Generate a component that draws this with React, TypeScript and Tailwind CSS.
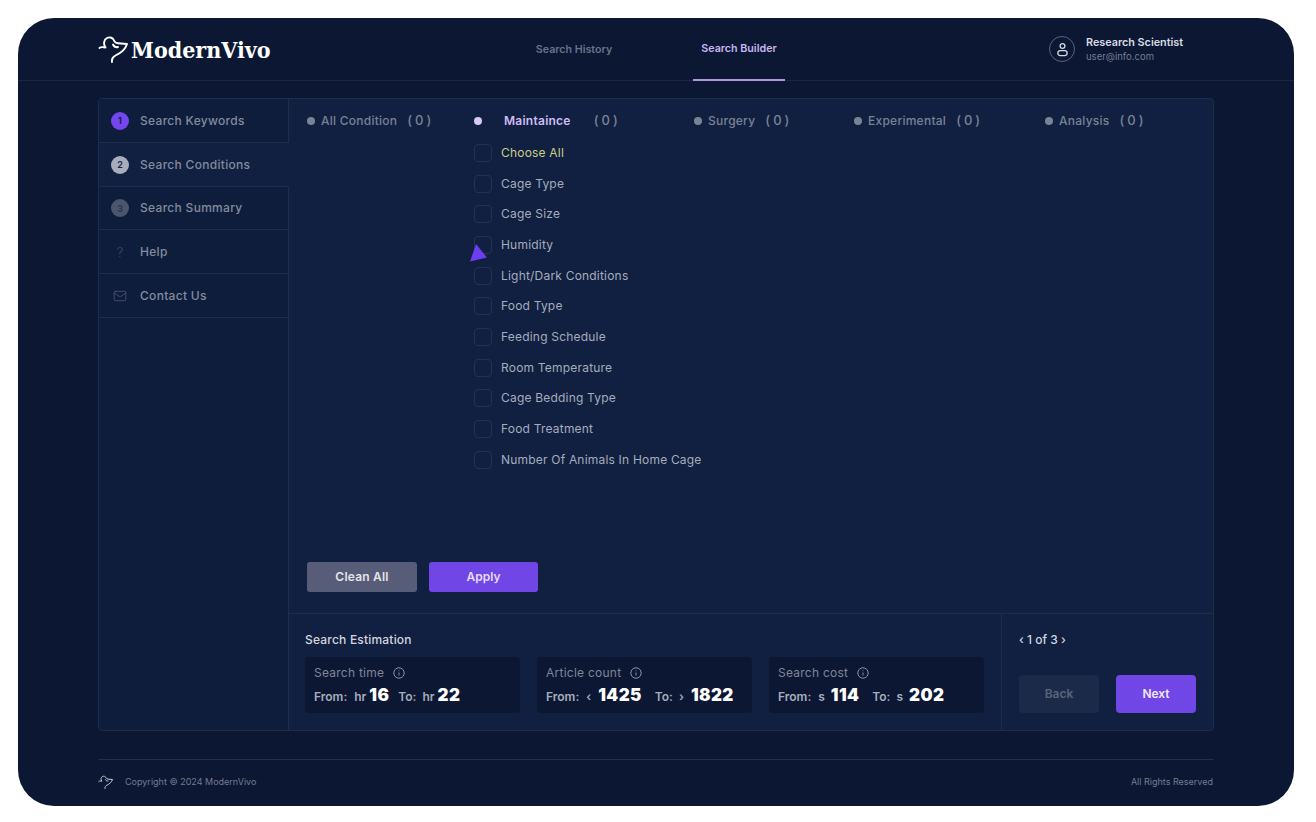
import { Mail } from "lucide-react";

const Logo = ({ className }: { className: string }) => (
  <svg viewBox="0 0 30 28" fill="none" stroke="currentColor" strokeWidth="1.9" strokeLinecap="round" strokeLinejoin="round" className={className}>
    <path d="M1.5 13C2.5 11.5 5 12 7.5 12.5C5 9 6 4.5 9 3C12 1.5 15 3 16 5.5C16.5 7 18 8 20 8.2L29 9C27.5 14 23 18 17.5 20.5C15 21.8 13.5 24 14 27" />
    <path d="M15 9.5C16 11.5 18 12.5 20 12" />
  </svg>
);

const Info = () => (
  <svg viewBox="0 0 12 12" fill="none" stroke="currentColor" className="w-[12px] h-[12px] text-[#8a93a8]">
    <circle cx="6" cy="6" r="5.2" />
    <path d="M6 5.5V8.5M6 3.4V4.2" />
  </svg>
);

const tabs = [
  { label: "All Condition", w: "w-[167px]", gap: "gap-[6px]", countGap: "ml-[4px]" },
  { label: "Maintaince", w: "w-[220px]", gap: "gap-[22px]", countGap: "ml-[1px]", active: true },
  { label: "Surgery", w: "w-[160px]", gap: "gap-[6px]", countGap: "ml-[4px]" },
  { label: "Experimental", w: "w-[191px]", gap: "gap-[6px]", countGap: "ml-[4px]" },
  { label: "Analysis", w: "w-[150px]", gap: "gap-[6px]", countGap: "ml-[4px]" },
];

const options = [
  "Choose All", "Cage Type", "Cage Size", "Humidity", "Light/Dark Conditions", "Food Type",
  "Feeding Schedule", "Room Temperature", "Cage Bedding Type", "Food Treatment", "Number Of Animals In Home Cage",
];

const estimates = [
  { title: "Search time", from: "16", to: "22", unit: "hr", toUnit: "hr", numGap: "ml-[3px]", toGap: "ml-[9px]" },
  { title: "Article count", from: "1425", to: "1822", unit: "‹", toUnit: "›", numGap: "ml-[7px]", toGap: "ml-[13px]" },
  { title: "Search cost", from: "114", to: "202", unit: "s", toUnit: "s", numGap: "ml-[6px]", toGap: "ml-[13px]" },
];

const sideRows = [
  { label: "Search Keywords", n: "1", badge: "bg-[#7446ee] text-[#0e1a38]" },
  { label: "Search Conditions", n: "2", badge: "bg-[#a6adbb] text-[#1a2540]", active: true },
  { label: "Search Summary", n: "3", badge: "bg-[#4a566e] text-[#283450]" },
];

export default function App() {
  return (
    <div className="h-[822px] bg-white pt-[18px] pl-[18px] font-['Inter',sans-serif]">
      <div className="w-[1276px] h-[788px] rounded-[36px] bg-[#0c1733] overflow-hidden flex flex-col">
        {/* Header */}
        <header className="h-[63px] shrink-0 border-b border-[#1a2742] flex pl-[80px]">
          <div className="w-[430px] flex items-center gap-[3px] text-white">
            <Logo className="w-[30px] h-[28px] text-white" />
            <span className="font-['DejaVu_Serif_Condensed','Liberation_Serif',serif] font-bold text-[23px] leading-none">ModernVivo</span>
          </div>
          <nav className="flex gap-[73px]">
            <div className="w-[92px] pt-[2px] flex items-center justify-center text-[10.7px] font-semibold text-[#69728a] whitespace-nowrap">Search History</div>
            <div className="w-[92px] pt-[2px] flex items-center justify-center text-[10.7px] font-semibold text-[#c6b6f0] border-b-2 border-[#a99ad8] whitespace-nowrap -mb-px">Search Builder</div>
          </nav>
          <div className="ml-[264px] flex items-center gap-[11px]">
            <div className="w-[26px] h-[26px] rounded-full border border-[#5a6479] flex items-center justify-center">
              <svg viewBox="0 0 14 16" fill="none" stroke="#d5d8df" strokeWidth="1.4" className="w-[13px] h-[15px]">
                <circle cx="7" cy="4.2" r="2.6" />
                <rect x="2" y="9.2" width="10" height="5.4" rx="2.7" />
              </svg>
            </div>
            <div className="flex flex-col gap-[2px]">
              <span className="text-[10.8px] leading-[13px] font-semibold text-[#d9dce3] whitespace-nowrap">Research Scientist</span>
              <span className="text-[9.5px] leading-[12px] text-[#737c91]">user@info.com</span>
            </div>
          </div>
        </header>

        {/* Panel */}
        <div className="mt-[17px] ml-[80px] w-[1116px] h-[633px] shrink-0 border border-[#1f2d4c] rounded-[4px] bg-[#112041] flex overflow-hidden">
          <aside className="w-[190px] shrink-0 flex flex-col border-r border-[#1f2d4c] bg-[#0f1d3c]">
            {sideRows.map((r) => (
              <div
                key={r.n}
                className={`h-[43.8px] shrink-0 flex items-center gap-[11px] pl-[12px] pt-px border-b ${
                  r.active ? "bg-[#112041] -mr-px border-[#1f2d4c]" : "border-[#1f2d4c]"
                }`}
              >
                <span className={`w-[18px] h-[18px] rounded-full flex items-center justify-center text-[9px] font-semibold ${r.badge}`}>{r.n}</span>
                <span className="text-[12px] font-medium tracking-[0.3px] text-[#838b9e] whitespace-nowrap">{r.label}</span>
              </div>
            ))}
            <div className="h-[43.8px] shrink-0 flex items-center gap-[11px] pl-[12px] pt-px border-b border-[#1f2d4c]">
              <span className="w-[18px] text-center text-[13px] font-light text-[#3f4a63]">?</span>
              <span className="text-[12px] font-medium tracking-[0.3px] text-[#838b9e]">Help</span>
            </div>
            <div className="h-[43.8px] shrink-0 flex items-center gap-[11px] pl-[12px] pt-px border-b border-[#1f2d4c]">
              <span className="w-[18px] flex justify-center"><Mail size={14} strokeWidth={1.2} className="text-[#56607a]" /></span>
              <span className="text-[12px] font-medium tracking-[0.3px] text-[#838b9e]">Contact Us</span>
            </div>
          </aside>

          <main className="flex-1 flex flex-col min-w-0">
            <section className="relative h-[515px] shrink-0 border-b border-[#1f2d4c] pl-[18px] pt-[14px] flex flex-col">
              <div className="flex h-[16px] items-center">
                {tabs.map((t) => (
                  <div key={t.label} className={`${t.w} shrink-0 flex items-center ${t.gap}`}>
                    <span className={`w-[8px] h-[8px] rounded-full ${t.active ? "bg-[#d8c8f8]" : "bg-[#7a8296]"}`} />
                    <span className={`text-[12px] whitespace-nowrap tracking-[0.25px] ${t.active ? "font-semibold text-[#cdbcf3]" : "font-medium text-[#7a8296]"}`}>{t.label}</span>
                    <span className={`${t.countGap} text-[13px] font-medium tracking-[3px] whitespace-nowrap text-[#7a8296]`}>(0)</span>
                  </div>
                ))}
              </div>

              <ul className="mt-[15px] ml-[167px] flex flex-col gap-[12.67px]">
                {options.map((o, i) => (
                  <li key={o} className="h-[18px] flex items-center gap-[9px]">
                    <span className="w-[18px] h-[18px] rounded-[4px] border border-[#24324f]" />
                    <span className={`text-[12px] tracking-[0.2px] whitespace-nowrap ${i === 0 ? "text-[#c9cf86]" : "text-[#a5acbc]"}`}>{o}</span>
                  </li>
                ))}
              </ul>

              <svg viewBox="0 0 18 19" className="absolute left-[180px] top-[144px] w-[18px] h-[19px]">
                <polygon points="1,18.5 7,1 18,14.5" fill="#6d3df0" />
              </svg>

              <div className="mt-auto mb-[21px] flex gap-[12px]">
                <button className="w-[110px] h-[30px] rounded-[3px] bg-[#575c78] text-[12px] font-semibold tracking-[0.2px] text-[#e4e5eb]">Clean All</button>
                <button className="w-[109px] h-[30px] rounded-[3px] bg-[#7146e6] text-[12px] font-semibold text-[#e6dcfb]">Apply</button>
              </div>
            </section>

            <section className="flex-1 flex min-h-0">
              <div className="w-[713px] shrink-0 border-r border-[#1f2d4c] pl-[16px] pt-[18px]">
                <h3 className="text-[12px] leading-[15px] font-medium tracking-[0.2px] text-[#d3d6de]">Search Estimation</h3>
                <div className="mt-[10px] flex gap-[17px]">
                  {estimates.map((e) => (
                    <div key={e.title} className="w-[215px] h-[56px] rounded-[4px] bg-[#0c1734] pl-[9px] pt-[8px]">
                      <div className="flex items-center gap-[9px] h-[15px]">
                        <span className="text-[12px] text-[#7e869a] tracking-[0.25px]">{e.title}</span>
                        <Info />
                      </div>
                      <div className="mt-[5px] flex items-baseline text-[12px] font-semibold text-[#a6acba] whitespace-nowrap">
                        <span>From:</span>
                        <span className="ml-[7px]">{e.unit}</span>
                        <span className={`${e.numGap} text-[17px] leading-[20px] font-black text-white tracking-[0.4px]`}>{e.from}</span>
                        <span className={e.toGap}>To:</span>
                        <span className="ml-[6px]">{e.toUnit}</span>
                        <span className={`${e.numGap} text-[17px] leading-[20px] font-black text-white tracking-[0.4px]`}>{e.to}</span>
                      </div>
                    </div>
                  ))}
                </div>
              </div>
              <div className="flex-1 pl-[17px] pt-[18px] flex flex-col">
                <div className="text-[12px] leading-[15px] font-medium text-[#d3d6de]">‹ 1 of 3 ›</div>
                <div className="mt-[28px] flex gap-[17px]">
                  <button className="w-[80px] h-[38px] rounded-[4px] bg-[#1c2a49] text-[12px] font-semibold text-[#5b647d]">Back</button>
                  <button className="w-[80px] h-[38px] rounded-[4px] bg-[#7146e6] text-[12px] font-semibold text-[#efe9fd]">Next</button>
                </div>
              </div>
            </section>
          </main>
        </div>

        {/* Footer */}
        <footer className="mt-[28px] ml-[80px] w-[1116px] border-t border-[#232f4b] pt-[15px] flex items-center">
          <Logo className="w-[15px] h-[14px] text-[#cfd3dc]" />
          <span className="ml-[12px] text-[9px] text-[#737c91]">Copyright © 2024 ModernVivo</span>
          <span className="ml-auto mr-px text-[9px] text-[#737c91]">All Rights Reserved</span>
        </footer>
      </div>
    </div>
  );
}
